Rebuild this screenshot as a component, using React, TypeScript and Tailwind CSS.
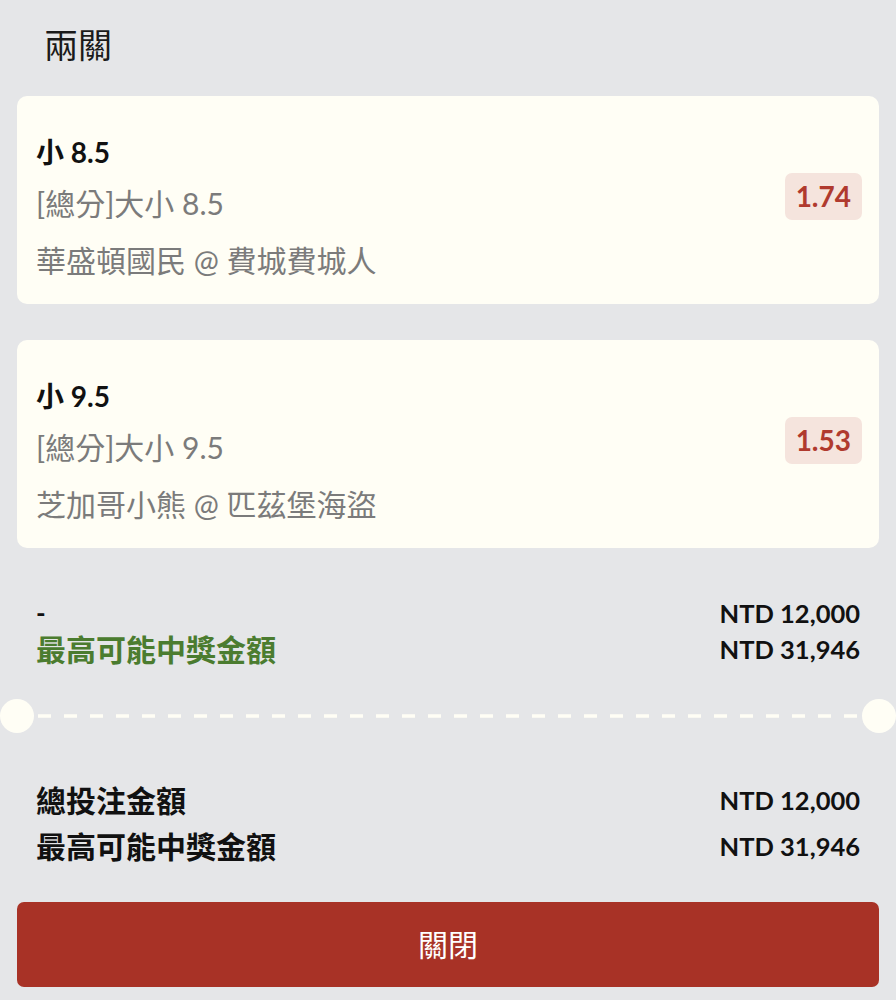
const FONT = "font-['Lato','Noto_Sans_CJK_TC',sans-serif]";

type Leg = {
  pick: string;
  market: string;
  match: string;
  odds: string;
};

const LEGS: Leg[] = [
  { pick: '小 8.5', market: '[總分]大小 8.5', match: '華盛頓國民 @ 費城費城人', odds: '1.74' },
  { pick: '小 9.5', market: '[總分]大小 9.5', match: '芝加哥小熊 @ 匹茲堡海盜', odds: '1.53' },
];

function LegCard({ leg }: { leg: Leg }) {
  return (
    <div className="flex h-[208px] items-center justify-between rounded-[10px] bg-[#fffef5] pl-[19px] pr-[17px]">
      <div className="flex flex-col pt-[14px]">
        <p className="text-[28px] font-bold leading-[32px] text-[#111]">{leg.pick}</p>
        <p className="mt-[17px] text-[30px] leading-[36px] text-[#7b7b7b]">{leg.market}</p>
        <p className="mt-[21px] text-[30px] leading-[36px] text-[#7b7b7b]">{leg.match}</p>
      </div>
      <span className="mb-[7px] rounded-[7px] bg-[#f5e4dd] px-[11px] py-[5px] text-[28px] font-bold leading-[37px] text-[#b03a2e]">
        {leg.odds}
      </span>
    </div>
  );
}

function DashedDivider() {
  return (
    <div className="mt-[32px] flex h-[34px] items-center">
      <div className="h-[34px] w-[34px] shrink-0 rounded-full bg-[#fffef5]" />
      <svg className="mx-[4px] h-[4px] flex-1" preserveAspectRatio="none">
        <line x1="0" y1="2" x2="100%" y2="2" stroke="#fffef5" strokeWidth="3.5" strokeDasharray="13 13" />
      </svg>
      <div className="h-[34px] w-[34px] shrink-0 rounded-full bg-[#fffef5]" />
    </div>
  );
}

export default function App() {
  return (
    <div className={`${FONT} min-h-[1000px] w-full bg-[#e5e6e8] pt-[20px]`}>
      <h1 className="pl-[44px] text-[34px] font-normal leading-[50px] text-[#1a1a1a]">兩關</h1>

      <div className="mt-[26px] flex flex-col gap-[36px] px-[17px]">
        {LEGS.map((leg) => (
          <LegCard key={leg.pick} leg={leg} />
        ))}
      </div>

      <section className="mt-[47px] px-[36px]">
        <div className="flex items-center justify-between leading-[36px]">
          <span className="text-[26px] font-bold text-[#111]">-</span>
          <span className="text-[25.5px] font-bold text-[#111]">NTD 12,000</span>
        </div>
        <div className="flex items-center justify-between leading-[36px]">
          <span className="text-[30px] font-bold text-[#4b7c2f]">最高可能中獎金額</span>
          <span className="text-[25.5px] font-bold text-[#111]">NTD 31,946</span>
        </div>
      </section>

      <DashedDivider />

      <section className="mt-[47px] px-[36px]">
        <div className="flex items-center justify-between leading-[40px]">
          <span className="text-[30px] font-bold text-[#111]">總投注金額</span>
          <span className="text-[25.5px] font-bold text-[#111]">NTD 12,000</span>
        </div>
        <div className="mt-[6px] flex items-center justify-between leading-[40px]">
          <span className="text-[30px] font-bold text-[#111]">最高可能中獎金額</span>
          <span className="text-[25.5px] font-bold text-[#111]">NTD 31,946</span>
        </div>
      </section>

      <div className="mt-[36px] px-[17px]">
        <button className="flex h-[85px] w-full items-center justify-center rounded-[7px] bg-[#a83226] text-[30px] text-white">
          關閉
        </button>
      </div>
    </div>
  );
}
